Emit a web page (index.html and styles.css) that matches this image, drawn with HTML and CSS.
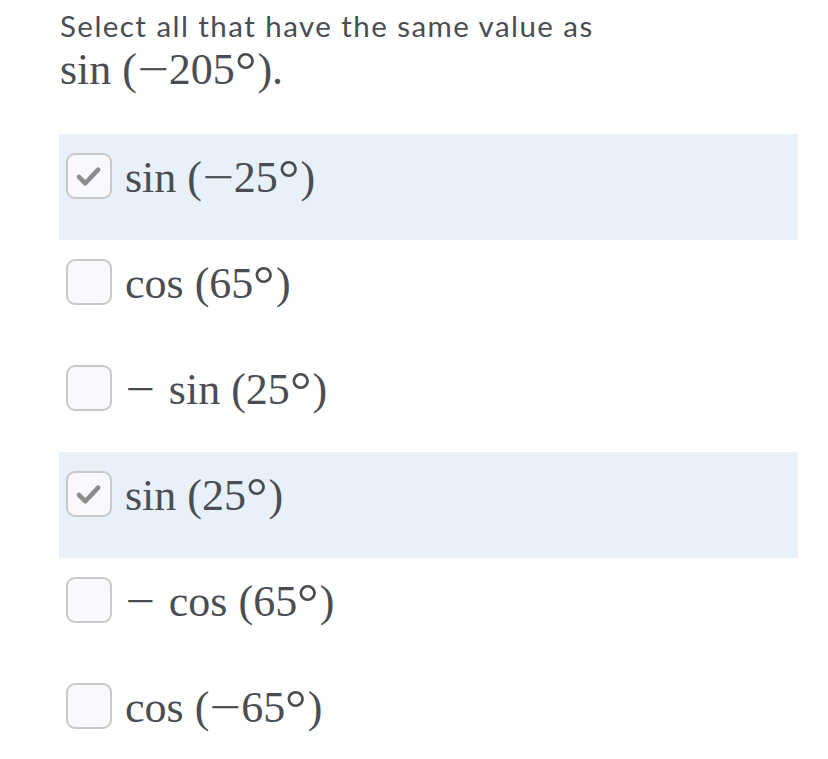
FILE: index.html
```html
<!DOCTYPE html>
<html>
<head>
<meta charset="utf-8">
<link rel="stylesheet" href="styles.css">
</head>
<body>
<div class="page">
  <div class="prompt">
    <div class="prompt-text">Select all that have the same value as</div>
    <div class="math prompt-math">sin (<span class="op">−</span>205<span class="deg">°</span>).</div>
  </div>
  <div class="options">
    <div class="option selected">
      <span class="box"><svg viewBox="0 0 46 46" width="46" height="46"><path d="M12 24 L19 31 L33 16" fill="none" stroke="#8c8c8c" stroke-width="5" stroke-linecap="round" stroke-linejoin="round"/></svg></span>
      <span class="math">sin (<span class="op">−</span>25<span class="deg">°</span>)</span>
    </div>
    <div class="option">
      <span class="box"></span>
      <span class="math">cos (65<span class="deg">°</span>)</span>
    </div>
    <div class="option">
      <span class="box"></span>
      <span class="math"><span class="op lead">−</span> sin (25<span class="deg">°</span>)</span>
    </div>
    <div class="option selected">
      <span class="box"><svg viewBox="0 0 46 46" width="46" height="46"><path d="M12 24 L19 31 L33 16" fill="none" stroke="#8c8c8c" stroke-width="5" stroke-linecap="round" stroke-linejoin="round"/></svg></span>
      <span class="math">sin (25<span class="deg">°</span>)</span>
    </div>
    <div class="option">
      <span class="box"></span>
      <span class="math"><span class="op lead">−</span> cos (65<span class="deg">°</span>)</span>
    </div>
    <div class="option">
      <span class="box"></span>
      <span class="math">cos (<span class="op">−</span>65<span class="deg">°</span>)</span>
    </div>
  </div>
</div>
</body>
</html>
```
FILE: styles.css
```css
html, body {
  margin: 0;
  padding: 0;
  background: #ffffff;
}
.page {
  padding: 8px 30px 0 59px;
  color: #4a4d52;
}
.prompt {
  padding-left: 1px;
  height: 126px;
}
.prompt-text {
  font-family: Lato, "Liberation Sans", sans-serif;
  font-size: 29.5px;
  letter-spacing: 1.45px;
  line-height: 36px;
}
.math {
  font-family: "Liberation Serif", "Times New Roman", serif;
  font-size: 44px;
  line-height: 52px;
  white-space: nowrap;
}
.op {
  display: inline-block;
  transform: scaleX(1.27);
  margin: 0 3px 0 4px;
}
.op.lead {
  transform: scaleX(1.18);
  margin: 0 5px 0 3px;
}
.deg {
  display: inline-block;
  transform: translateY(-3px) scale(1.22);
  transform-origin: 0 20%;
  margin-right: 5px;
}
.options {
  display: flex;
  flex-direction: column;
}
.option {
  display: flex;
  align-items: flex-start;
  gap: 13px;
  height: 106px;
  box-sizing: border-box;
  padding: 18px 0 0 7px;
}
.option.selected {
  background: #e8f0fa;
}
.box {
  flex: none;
  width: 46px;
  height: 46px;
  box-sizing: border-box;
  margin-top: 1px;
  border: 2px solid #c9c9c9;
  border-radius: 9px;
  background: #f7f9fc;
  display: flex;
  align-items: center;
  justify-content: center;
}
.box svg {
  display: block;
}
```
